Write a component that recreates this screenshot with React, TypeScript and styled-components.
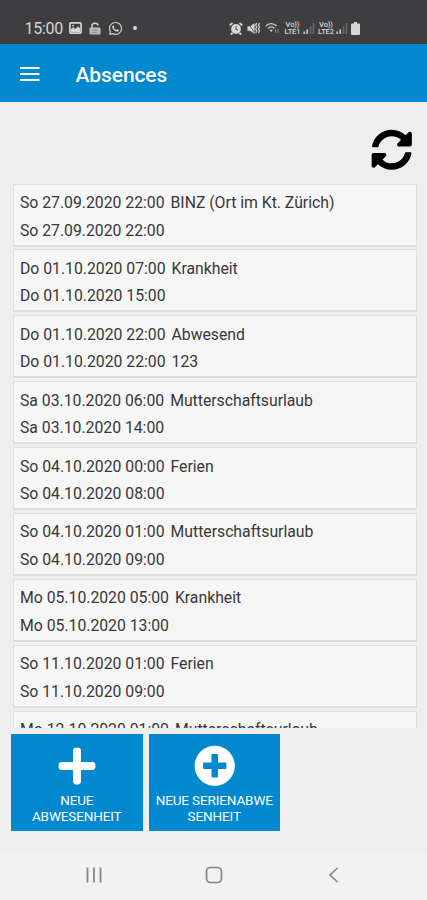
import React from "react";
import styled, { createGlobalStyle } from "styled-components";
import { FaPlus, FaPlusCircle, FaSyncAlt, FaWhatsapp } from "react-icons/fa";

const GlobalStyle = createGlobalStyle`
  *, *::before, *::after { box-sizing: border-box; }
  html, body { margin: 0; padding: 0; }
  body { font-family: Roboto, "Liberation Sans", sans-serif; background: #eeeeee; }
  button { font-family: inherit; border: 0; padding: 0; cursor: pointer; }
  svg { display: block; flex: none; }
`;

const Screen = styled.div`
  display: flex;
  flex-direction: column;
  height: 900px;
  width: 100%;
  overflow: hidden;
  background: #eeeeee;
`;

const StatusBar = styled.div`
  display: flex;
  justify-content: space-between;
  height: 44px;
  flex: none;
  padding: 12px 67.5px 0 24.5px;
  background: #3e3e40;
  color: #d6d6d6;
`;

const StatusGroup = styled.div<{ $gap: number }>`
  display: flex;
  align-items: center;
  gap: ${(p) => p.$gap}px;
  height: 32px;
`;

const Clock = styled.span`
  font-size: 16px;
  line-height: 33px;
  letter-spacing: -0.3px;
  width: 37px;
  white-space: nowrap;
`;

const Header = styled.header`
  display: flex;
  align-items: center;
  height: 58px;
  flex: none;
  padding: 2px 20px 0;
  background: #0288ce;
  color: #ffffff;
`;

const MenuButton = styled.button`
  display: flex;
  width: 20px;
  background: transparent;
  color: inherit;
`;

const Title = styled.h1`
  margin: 1px 0 0 35.5px;
  font-size: 21px;
  font-weight: 500;
  line-height: 30px;
  letter-spacing: -0.1px;
`;

const Toolbar = styled.div`
  display: flex;
  justify-content: flex-end;
  height: 81px;
  flex: none;
  padding: 27px 14.5px 0 0;
`;

const RefreshButton = styled.button`
  width: 41.5px;
  height: 41.5px;
  background: transparent;
  color: #000000;
`;

const List = styled.div`
  display: flex;
  flex-direction: column;
  gap: 2.9px;
  height: 545px;
  flex: none;
  overflow: hidden;
  padding: 0.5px 10px 0 12.5px;
`;

const Card = styled.div`
  flex: none;
  height: 63px;
  padding: 4.5px 6px 0 6.5px;
  border: 1px solid #dddddd;
  border-width: 1px 1.5px 2px;
  background: #f6f6f6;
`;

const CardLine = styled.div`
  display: flex;
  gap: 6px;
  height: 27.6px;
  font-size: 15.8px;
  line-height: 27.6px;
  letter-spacing: -0.02px;
  color: #383838;
  white-space: nowrap;
`;

const Actions = styled.div`
  display: flex;
  gap: 6px;
  flex: 1;
  align-items: flex-start;
  padding: 6px 11px 0;
`;

const ActionButton = styled.button`
  display: flex;
  flex-direction: column;
  align-items: center;
  width: 131.5px;
  height: 96.5px;
  background: #0288ce;
  color: #ffffff;
`;

const ActionIcon = styled.span`
  display: flex;
  align-items: center;
  height: 41px;
  margin: 11px 0 6px;
`;

const ActionLabel = styled.span`
  font-size: 13.5px;
  line-height: 16px;
  letter-spacing: -0.13px;
  text-transform: uppercase;
  white-space: pre-line;
  text-align: center;
`;

const NavBar = styled.nav`
  display: flex;
  align-items: center;
  justify-content: space-between;
  height: 48px;
  flex: none;
  padding: 0 87.5px 2px 84px;
  background: #f2f2f2;
  color: #858585;
`;

const PictureIcon = () => (
  <svg width="13" height="12" viewBox="0 0 13 12">
    <rect x="0.9" y="0.9" width="11.2" height="10.2" rx="1" fill="none" stroke="currentColor" strokeWidth="1.7" />
    <path d="M2 10V7l2.3-1.7L6.5 7l2.6-2.7L11 6.5V10z" fill="currentColor" />
    <circle cx="4" cy="3.6" r="0.9" fill="currentColor" />
  </svg>
);

const LockIcon = () => (
  <svg width="12" height="13" viewBox="0 0 12 13">
    <path d="M3 6V3.8C3 .5 8.8.4 9 3.5" fill="none" stroke="currentColor" strokeWidth="1.4" />
    <rect x="0.5" y="5.5" width="11" height="7" rx="1" fill="#bdbdbd" />
    <path d="M3 8h6M3 10.3h6" stroke="#77777a" strokeWidth="0.7" />
  </svg>
);

const StatusDot = styled.span`
  width: 4px;
  height: 4px;
  margin-left: 3px;
  border-radius: 50%;
  background: currentColor;
`;

const AlarmIcon = () => (
  <svg width="14" height="13" viewBox="0 0 14 13">
    <circle cx="7" cy="7" r="4.9" fill="currentColor" />
    <path d="M.7 3.4L3.5 1M13.3 3.4L10.5 1M3.5 11l-1.6 1.6M10.5 11l1.6 1.6" stroke="currentColor" strokeWidth="1.9" />
    <path d="M7 4.2V7.2l2 1.2" fill="none" stroke="#3e3e40" strokeWidth="1" />
  </svg>
);

const MuteIcon = () => (
  <svg width="14" height="13" viewBox="0 0 14 13">
    <path d="M.5 4.3h2.6L7.6 1v11L3.1 8.7H.5z" fill="currentColor" />
    <path d="M.8 1l8 11" stroke="#3e3e40" strokeWidth="0.8" />
    <path d="M9.7 1l-1 2 1 2-1 2 1 2-1 2M12.5 1l-1 2 1 2-1 2 1 2-1 2" fill="none" stroke="currentColor" strokeWidth="1.2" />
  </svg>
);

const WifiIcon = () => (
  <svg width="15" height="12" viewBox="0 0 15 12">
    <path d="M.8 4C4 .7 8.5.7 11.6 4M3 6.4c2-1.9 4.500-1.9 6.4 0" fill="none" stroke="currentColor" strokeWidth="1.3" />
    <path d="M4.5 7.8h3.4L6.200 10z" fill="currentColor" />
    <path d="M10.5 7v4M13 7v4" stroke="#808080" strokeWidth="1.2" />
  </svg>
);

const LteBlock = styled.span`
  display: flex;
  flex-direction: column;
  width: 18px;
  font-size: 7.5px;
  font-weight: 500;
  line-height: 7px;
  letter-spacing: -0.1px;
  text-align: center;
`;

const SignalIcon = () => (
  <svg width="12" height="12" viewBox="0 0 12 12">
    <path d="M1.2 12V9.5M4.2 12V7.5" stroke="currentColor" strokeWidth="1.5" />
    <path d="M7.5 12V4M10.5 12V1" stroke="#666668" strokeWidth="1.7" />
  </svg>
);

const BatteryIcon = () => (
  <svg width="9" height="13" viewBox="0 0 9 13">
    <path d="M3 0h3v1.5h2a1 1 0 0 1 1 1V12a1 1 0 0 1-1 1H1a1 1 0 0 1-1-1V2.5a1 1 0 0 1 1-1h2z" fill="currentColor" />
  </svg>
);

const SignalGroup = styled.span`
  display: flex;
  align-items: center;
  gap: 1px;
  margin-right: -1.5px;
`;

const absences = [
  { from: "So 27.09.2020 22:00", to: "So 27.09.2020 22:00", reason: "BINZ (Ort im Kt. Zürich)" },
  { from: "Do 01.10.2020 07:00", to: "Do 01.10.2020 15:00", reason: "Krankheit" },
  { from: "Do 01.10.2020 22:00", to: "Do 01.10.2020 22:00", reason: "Abwesend", note: "123" },
  { from: "Sa 03.10.2020 06:00", to: "Sa 03.10.2020 14:00", reason: "Mutterschaftsurlaub" },
  { from: "So 04.10.2020 00:00", to: "So 04.10.2020 08:00", reason: "Ferien" },
  { from: "So 04.10.2020 01:00", to: "So 04.10.2020 09:00", reason: "Mutterschaftsurlaub" },
  { from: "Mo 05.10.2020 05:00", to: "Mo 05.10.2020 13:00", reason: "Krankheit" },
  { from: "So 11.10.2020 01:00", to: "So 11.10.2020 09:00", reason: "Ferien" },
  { from: "Mo 12.10.2020 01:00", to: "", reason: "Mutterschaftsurlaub" },
];

export default function App() {
  return (
    <>
      <GlobalStyle />
      <Screen>
        <StatusBar>
          <StatusGroup $gap={7}>
            <Clock>15:00</Clock>
            <PictureIcon />
            <LockIcon />
            <FaWhatsapp size={15} />
            <StatusDot />
          </StatusGroup>
          <StatusGroup $gap={4}>
            <AlarmIcon />
            <MuteIcon />
            <WifiIcon />
            <SignalGroup>
              <LteBlock><span>Vo))</span><span>LTE1</span></LteBlock>
              <SignalIcon />
            </SignalGroup>
            <SignalGroup>
              <LteBlock><span>Vo))</span><span>LTE2</span></LteBlock>
              <SignalIcon />
            </SignalGroup>
            <BatteryIcon />
          </StatusGroup>
        </StatusBar>
        <Header>
          <MenuButton aria-label="Menu">
            <svg width="20" height="16" viewBox="0 0 20 16">
              <path d="M0 2h19.5M0 8h19.5M0 14h19.5" stroke="currentColor" strokeWidth="2.2" />
            </svg>
          </MenuButton>
          <Title>Absences</Title>
        </Header>
        <Toolbar>
          <RefreshButton aria-label="Refresh"><FaSyncAlt size={41.5} /></RefreshButton>
        </Toolbar>
        <List>
          {absences.map((a) => (
            <Card key={a.from}>
              <CardLine><span>{a.from}</span><span>{a.reason}</span></CardLine>
              <CardLine><span>{a.to}</span>{a.note && <span>{a.note}</span>}</CardLine>
            </Card>
          ))}
        </List>
        <Actions>
          <ActionButton>
            <ActionIcon><FaPlus size={42} /></ActionIcon>
            <ActionLabel>{"Neue\nAbwesenheit"}</ActionLabel>
          </ActionButton>
          <ActionButton>
            <ActionIcon><FaPlusCircle size={41.5} /></ActionIcon>
            <ActionLabel>{"Neue Serienabwe\nsenheit"}</ActionLabel>
          </ActionButton>
        </Actions>
        <NavBar>
          <svg width="20" height="18" viewBox="0 0 20 18">
            <path d="M3.5 1.5v15M10 1.5v15M16.5 1.5v15" stroke="currentColor" strokeWidth="1.8" />
          </svg>
          <svg width="20" height="18" viewBox="0 0 20 18">
            <rect x="1.5" y="1.5" width="15" height="15" rx="4" fill="none" stroke="currentColor" strokeWidth="1.7" />
          </svg>
          <svg width="14" height="18" viewBox="0 0 14 18">
            <path d="M11.5 2L4 9l7.5 7" fill="none" stroke="currentColor" strokeWidth="1.7" />
          </svg>
        </NavBar>
      </Screen>
    </>
  );
}
